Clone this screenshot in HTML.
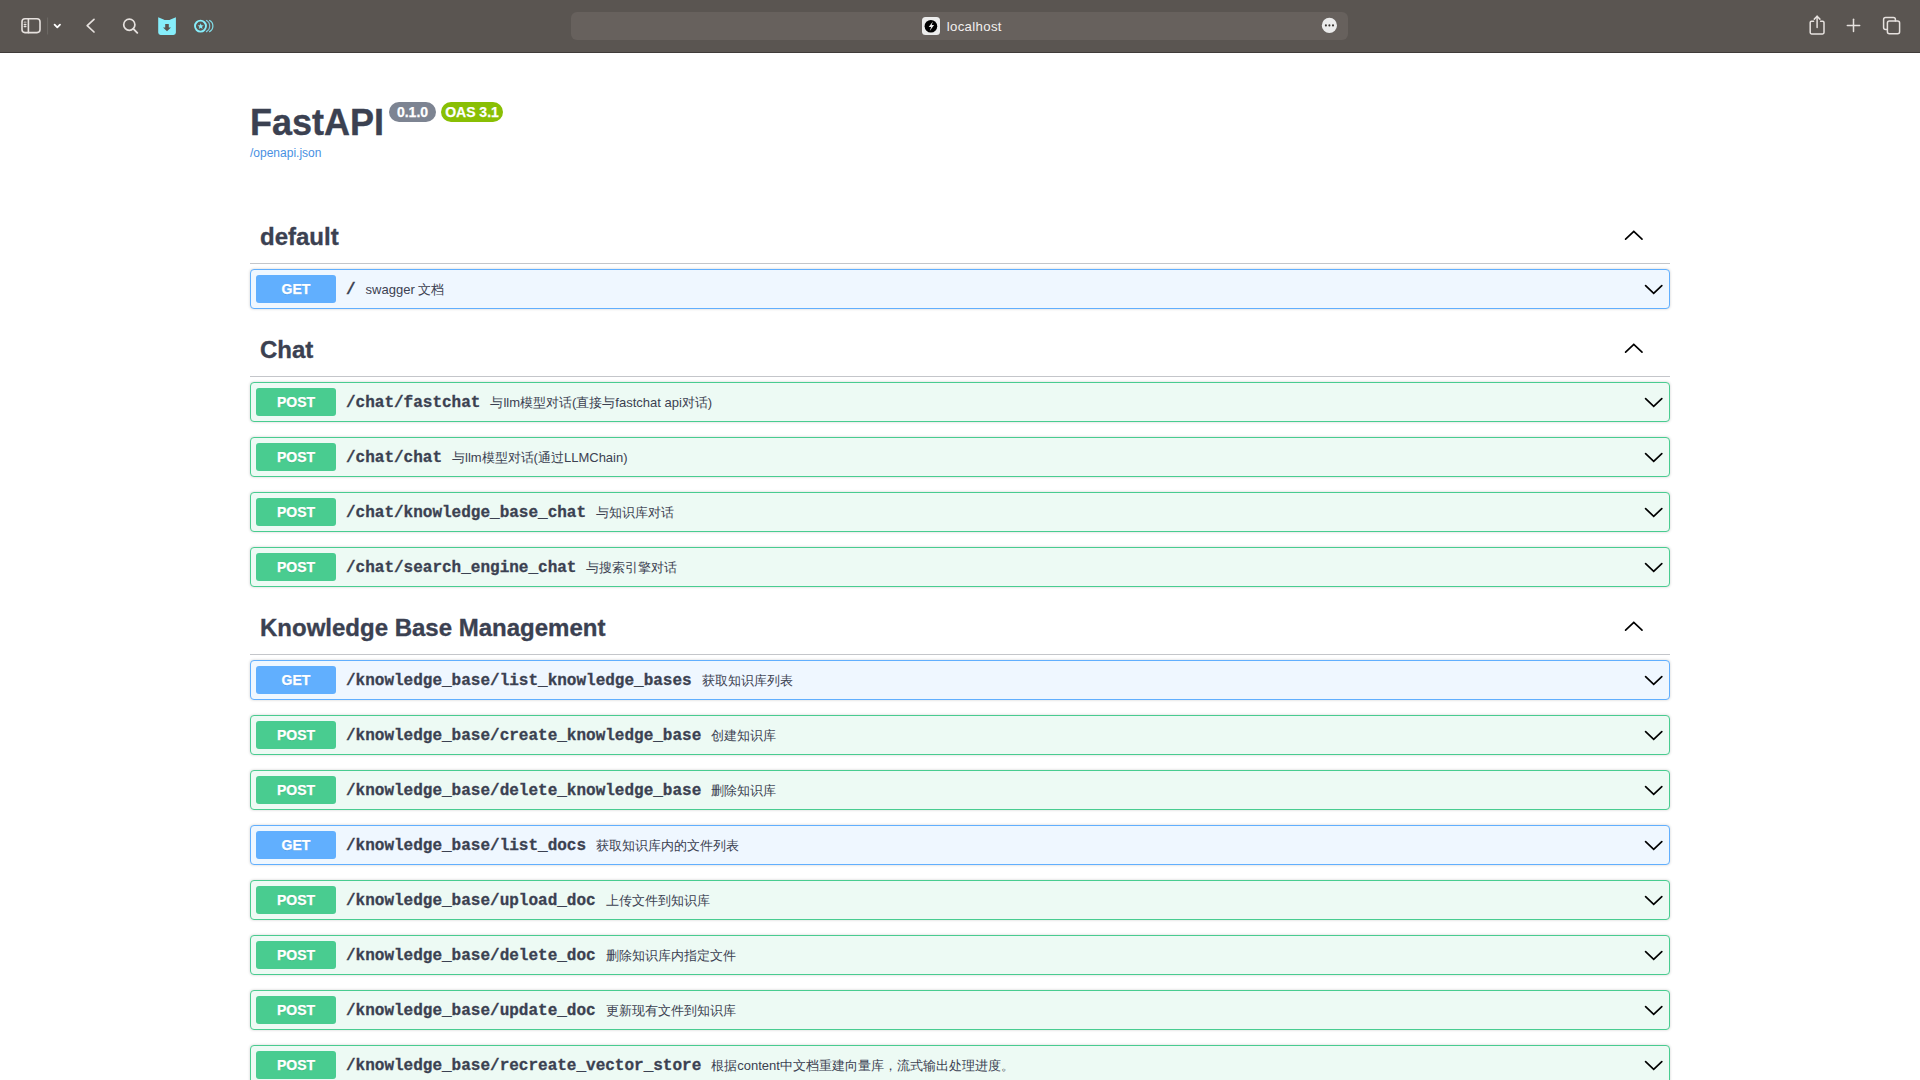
<!DOCTYPE html>
<html><head><meta charset="utf-8">
<style>
*{box-sizing:border-box}
html,body{margin:0;padding:0;background:#fff;width:1920px;height:1080px;overflow:hidden}
body{font-family:"Liberation Sans",sans-serif;color:#3b4151;position:relative}
.ico{position:absolute}
#page{position:absolute;left:250px;top:53px;width:1420px}
.title{position:absolute;left:0;top:48.5px;font-size:36px;font-weight:700;color:#3b4151;white-space:nowrap;line-height:42px}
.badge{position:absolute;top:49px;height:20px;border-radius:10px;color:#fff;font-weight:700;font-size:14px;line-height:20px;text-align:center}
.link{position:absolute;left:0;top:93px;font-size:12px;color:#4990e2}
.tag{position:absolute;left:0;width:1420px;height:53px;border-bottom:1px solid rgba(59,65,81,.3)}
.tag .n{position:absolute;left:10px;top:12px;font-size:24px;font-weight:700;line-height:28px;white-space:nowrap}
.tag svg{position:absolute;left:1370px;top:14.5px}
.op{position:absolute;left:0;width:1420px;height:40px;border:1px solid;border-radius:4px;box-shadow:0 0 3px rgba(0,0,0,.19)}
.op.g{background:#eff7ff;border-color:#61affe}
.op.p{background:#edfaf4;border-color:#49cc90}
.op .m{position:absolute;left:5px;top:5px;width:80px;height:28px;border-radius:3px;color:#fff;font-size:14px;font-weight:700;text-align:center;line-height:28px;text-shadow:0 1px 0 rgba(0,0,0,.1)}
.op.g .m{background:#61affe}
.op.p .m{background:#49cc90}
.op .pa{position:absolute;left:95px;top:11px;font-family:"Liberation Mono",monospace;font-size:16px;font-weight:700;line-height:18px;white-space:nowrap;color:#3b4151;display:flex;align-items:baseline}
.op .pa span.d{font-family:"Liberation Sans",sans-serif;font-weight:400;font-size:13px;margin-left:10px}
.op svg{position:absolute;left:1390px;top:10px}
.title,.tag .n{-webkit-text-stroke:0.35px #3b4151}
.op .pa{-webkit-text-stroke:0.3px #3b4151}
.op .pa span.d{-webkit-text-stroke:0}
.op .m,.badge{-webkit-text-stroke:0.25px #fff}
</style></head><body>
<svg id="tb" width="1920" height="53" viewBox="0 0 1920 53" style="position:absolute;left:0;top:0">
  <rect x="0" y="0" width="1920" height="52" fill="#5a5551"/>
  <rect x="0" y="52" width="1920" height="1" fill="#3f3b39"/>
  <g fill="none" stroke="#e6e1de" stroke-width="1.6" stroke-linecap="round" stroke-linejoin="round">
    <rect x="22" y="18.8" width="18" height="13.8" rx="3"/>
    <line x1="28.4" y1="18.8" x2="28.4" y2="32.6"/>
    <line x1="24.3" y1="22.2" x2="25.9" y2="22.2" stroke="#b9b3b0" stroke-width="1.3"/>
    <line x1="24.3" y1="24.5" x2="25.9" y2="24.5" stroke-width="1.3"/>
    <line x1="24.3" y1="26.5" x2="25.9" y2="26.5" stroke-width="1.3"/>
    <polyline points="54.6,24.7 57.3,27.4 60,24.7" stroke="#ffffff" stroke-width="1.8"/>
    <polyline points="94,19.3 87.2,25.6 94,32" stroke-width="1.7"/>
    <circle cx="129.3" cy="24.7" r="5.6" stroke-width="1.7"/>
    <line x1="133.4" y1="28.9" x2="137.3" y2="32.8" stroke-width="1.9"/>
    <path d="M1813.6 21.2 L1811.6 21.2 Q1810.2 21.2 1810.2 22.6 L1810.2 32.6 Q1810.2 34 1811.6 34 L1822.6 34 Q1824 34 1824 32.6 L1824 22.6 Q1824 21.2 1822.6 21.2 L1820.6 21.2" stroke-width="1.5"/>
    <line x1="1817.1" y1="16.3" x2="1817.1" y2="27.4" stroke-width="1.5"/>
    <polyline points="1814.3,19.1 1817.1,16.3 1819.9,19.1" stroke-width="1.5"/>
    <line x1="1853.5" y1="19.2" x2="1853.5" y2="31.6" stroke-width="1.5"/>
    <line x1="1847.3" y1="25.4" x2="1859.7" y2="25.4" stroke-width="1.5"/>
    <path d="M1886.6 29.6 L1885.6 29.6 Q1883.6 29.6 1883.6 27.6 L1883.6 19.4 Q1883.6 17.4 1885.6 17.4 L1893.4 17.4 Q1895.4 17.4 1895.4 19.4 L1895.4 21" stroke-width="1.5"/>
    <rect x="1887.4" y="21.1" width="12.2" height="12.6" rx="2" stroke-width="1.5"/>
  </g>
  <line x1="47.6" y1="17.5" x2="47.6" y2="34.5" stroke="#6e6966" stroke-width="1"/>
  <!-- cyan icon 1 -->
  <path d="M158.2 17.3 L163.6 19.4 Q164.5 19.9 165.5 19.9 L168.6 19.9 Q169.6 19.9 170.5 19.4 L175.9 17.3 L175.9 32.6 Q175.9 35 173.5 35 L160.6 35 Q158.2 35 158.2 32.6 Z" fill="#86eefb"/>
  <path d="M165.2 23.9 L168.8 23.9 L168.8 27.6 L171 27.6 L167 31.3 L163 27.6 L165.2 27.6 Z" fill="#5a5551"/>
  <!-- cyan icon 2 -->
  <circle cx="200.5" cy="26.1" r="5.5" fill="none" stroke="#86eefb" stroke-width="1.9"/>
  <polygon points="200.70,23.15 201.49,25.31 203.79,25.40 201.98,26.82 202.61,29.03 200.70,27.75 198.79,29.03 199.42,26.82 197.61,25.40 199.91,25.31" fill="#86eefb"/>
  <path d="M206.0 20.3 A6.4 6.4 0 0 1 206.0 31.9" fill="none" stroke="#7fd6ea" stroke-width="1.2" opacity="0.9"/>
  <path d="M209.2 20.3 A6.4 6.4 0 0 1 209.2 31.9" fill="none" stroke="#86eefb" stroke-width="1.2" opacity="0.9"/>
  <!-- url bar -->
  <rect x="571" y="12" width="777" height="28" rx="6" fill="#67615d"/>
  <rect x="922" y="17" width="18" height="18" rx="3.5" fill="#ececec"/>
  <circle cx="930.9" cy="26.2" r="6.3" fill="#000"/>
  <path d="M932.9 21.4 L928.7 27.1 L931.1 27.1 L929.7 31 L934.1 25.1 L931.7 25.1 Z" fill="#ececec"/>
  <text x="946.7" y="30.9" font-family="Liberation Sans" font-size="13.2" letter-spacing="0.35" fill="#f2f0ef">localhost</text>
  <circle cx="1329.4" cy="25.4" r="7.6" fill="#ebebeb"/>
  <circle cx="1325.9" cy="25.4" r="1.05" fill="#3a3633"/>
  <circle cx="1329.4" cy="25.4" r="1.05" fill="#3a3633"/>
  <circle cx="1333" cy="25.4" r="1.05" fill="#3a3633"/>
</svg>
<div id="page">
  <div class="title">FastAPI</div>
  <div class="badge" style="left:139px;width:47px;background:#7d8492">0.1.0</div>
  <div class="badge" style="left:191px;width:62px;background:#89bf04">OAS 3.1</div>
  <div class="link">/openapi.json</div>

  <div class="tag" style="top:158px"><div class="n">default</div><svg width="28" height="20" viewBox="0 0 28 20"><path d="M5.6 13.2 L13.8 5.5 L22 13.2" fill="none" stroke="#000" stroke-width="1.7" stroke-linecap="round"/></svg></div>
  <div class="op g" style="top:216px"><div class="m">GET</div><div class="pa">/<span class="d">swagger 文档</span></div><svg width="28" height="20" viewBox="0 0 28 20"><path d="M4.6 5.6 L12.7 13.3 L20.8 5.6" fill="none" stroke="#000" stroke-width="1.7" stroke-linecap="round"/></svg></div>
  <div class="tag" style="top:271px"><div class="n">Chat</div><svg width="28" height="20" viewBox="0 0 28 20"><path d="M5.6 13.2 L13.8 5.5 L22 13.2" fill="none" stroke="#000" stroke-width="1.7" stroke-linecap="round"/></svg></div>
  <div class="op p" style="top:329px"><div class="m">POST</div><div class="pa">/chat/fastchat<span class="d">与llm模型对话(直接与fastchat api对话)</span></div><svg width="28" height="20" viewBox="0 0 28 20"><path d="M4.6 5.6 L12.7 13.3 L20.8 5.6" fill="none" stroke="#000" stroke-width="1.7" stroke-linecap="round"/></svg></div>
  <div class="op p" style="top:384px"><div class="m">POST</div><div class="pa">/chat/chat<span class="d">与llm模型对话(通过LLMChain)</span></div><svg width="28" height="20" viewBox="0 0 28 20"><path d="M4.6 5.6 L12.7 13.3 L20.8 5.6" fill="none" stroke="#000" stroke-width="1.7" stroke-linecap="round"/></svg></div>
  <div class="op p" style="top:439px"><div class="m">POST</div><div class="pa">/chat/knowledge_base_chat<span class="d">与知识库对话</span></div><svg width="28" height="20" viewBox="0 0 28 20"><path d="M4.6 5.6 L12.7 13.3 L20.8 5.6" fill="none" stroke="#000" stroke-width="1.7" stroke-linecap="round"/></svg></div>
  <div class="op p" style="top:494px"><div class="m">POST</div><div class="pa">/chat/search_engine_chat<span class="d">与搜索引擎对话</span></div><svg width="28" height="20" viewBox="0 0 28 20"><path d="M4.6 5.6 L12.7 13.3 L20.8 5.6" fill="none" stroke="#000" stroke-width="1.7" stroke-linecap="round"/></svg></div>
  <div class="tag" style="top:549px"><div class="n">Knowledge Base Management</div><svg width="28" height="20" viewBox="0 0 28 20"><path d="M5.6 13.2 L13.8 5.5 L22 13.2" fill="none" stroke="#000" stroke-width="1.7" stroke-linecap="round"/></svg></div>
  <div class="op g" style="top:607px"><div class="m">GET</div><div class="pa">/knowledge_base/list_knowledge_bases<span class="d">获取知识库列表</span></div><svg width="28" height="20" viewBox="0 0 28 20"><path d="M4.6 5.6 L12.7 13.3 L20.8 5.6" fill="none" stroke="#000" stroke-width="1.7" stroke-linecap="round"/></svg></div>
  <div class="op p" style="top:662px"><div class="m">POST</div><div class="pa">/knowledge_base/create_knowledge_base<span class="d">创建知识库</span></div><svg width="28" height="20" viewBox="0 0 28 20"><path d="M4.6 5.6 L12.7 13.3 L20.8 5.6" fill="none" stroke="#000" stroke-width="1.7" stroke-linecap="round"/></svg></div>
  <div class="op p" style="top:717px"><div class="m">POST</div><div class="pa">/knowledge_base/delete_knowledge_base<span class="d">删除知识库</span></div><svg width="28" height="20" viewBox="0 0 28 20"><path d="M4.6 5.6 L12.7 13.3 L20.8 5.6" fill="none" stroke="#000" stroke-width="1.7" stroke-linecap="round"/></svg></div>
  <div class="op g" style="top:772px"><div class="m">GET</div><div class="pa">/knowledge_base/list_docs<span class="d">获取知识库内的文件列表</span></div><svg width="28" height="20" viewBox="0 0 28 20"><path d="M4.6 5.6 L12.7 13.3 L20.8 5.6" fill="none" stroke="#000" stroke-width="1.7" stroke-linecap="round"/></svg></div>
  <div class="op p" style="top:827px"><div class="m">POST</div><div class="pa">/knowledge_base/upload_doc<span class="d">上传文件到知识库</span></div><svg width="28" height="20" viewBox="0 0 28 20"><path d="M4.6 5.6 L12.7 13.3 L20.8 5.6" fill="none" stroke="#000" stroke-width="1.7" stroke-linecap="round"/></svg></div>
  <div class="op p" style="top:882px"><div class="m">POST</div><div class="pa">/knowledge_base/delete_doc<span class="d">删除知识库内指定文件</span></div><svg width="28" height="20" viewBox="0 0 28 20"><path d="M4.6 5.6 L12.7 13.3 L20.8 5.6" fill="none" stroke="#000" stroke-width="1.7" stroke-linecap="round"/></svg></div>
  <div class="op p" style="top:937px"><div class="m">POST</div><div class="pa">/knowledge_base/update_doc<span class="d">更新现有文件到知识库</span></div><svg width="28" height="20" viewBox="0 0 28 20"><path d="M4.6 5.6 L12.7 13.3 L20.8 5.6" fill="none" stroke="#000" stroke-width="1.7" stroke-linecap="round"/></svg></div>
  <div class="op p" style="top:992px"><div class="m">POST</div><div class="pa">/knowledge_base/recreate_vector_store<span class="d">根据content中文档重建向量库，流式输出处理进度。</span></div><svg width="28" height="20" viewBox="0 0 28 20"><path d="M4.6 5.6 L12.7 13.3 L20.8 5.6" fill="none" stroke="#000" stroke-width="1.7" stroke-linecap="round"/></svg></div>
</div>
</body></html>
